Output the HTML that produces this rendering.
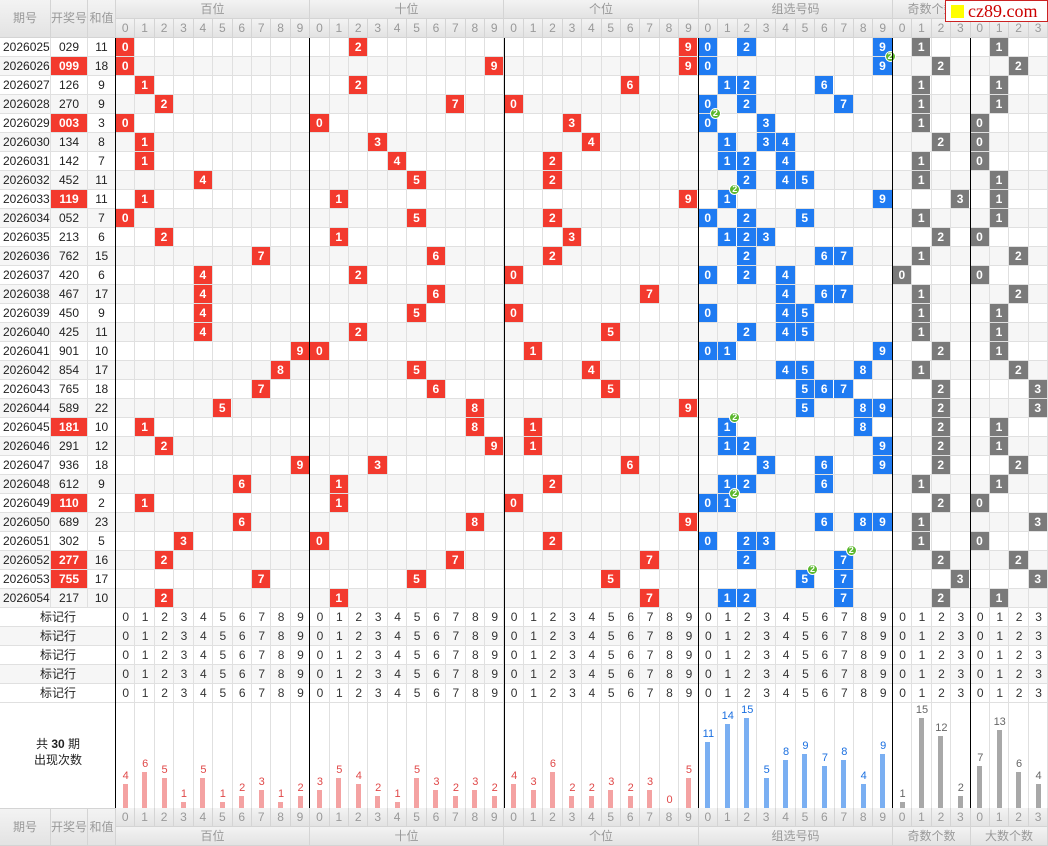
<!DOCTYPE html>
<html><head><meta charset="utf-8"><style>
*{box-sizing:border-box}
body{margin:0;background:#fff;width:1048px;height:846px;overflow:hidden;position:relative;font-family:"Liberation Sans","Noto Sans CJK SC",sans-serif;font-size:12px;color:#222}
.abs{position:absolute}
.hd{position:absolute;background:linear-gradient(#f3f3f3,#e3e3e3);color:#999;text-align:center;border-right:1px solid #d4d4d4;border-bottom:1px solid #d4d4d4}
.nums{position:absolute;left:116px;width:932px;display:flex}
.nums span{flex:1 1 0;min-width:0;text-align:center;border-right:1px solid #d4d4d4;height:19px;line-height:18px}
.nums.h span{background:linear-gradient(#f3f3f3,#e3e3e3);color:#999;border-bottom:1px solid #d4d4d4}
.row{position:relative;height:19px;border-bottom:1px solid #e0e0e0;line-height:18px}
.row:nth-child(even){background:#f6f6f6}
.q,.k,.s{position:absolute;top:0;height:18px;border-right:1px solid #e0e0e0;text-align:center}
.q{left:0;width:51px;text-align:left;padding-left:3px}
.k{left:51px;width:37px}
.s{left:88px;width:28px}
.k.r{background:#f33a2e;color:#fff;font-weight:bold}
.cs{position:absolute;left:116px;top:0;width:932px;height:18px;z-index:3}
.c{position:absolute;top:0;left:calc(var(--c) * 19.4167px);width:18.4px;height:18px;color:#fff;font-weight:bold;text-align:center;line-height:18px}
.r{background:#f33a2e}.b{background:#1f7bf2}.g{background:#7a7a7a}
.c i{position:absolute;top:-6px;right:-4px;width:11px;height:11px;border-radius:50%;background:#5cb82e;color:#fff;font-size:9px;line-height:9px;font-style:normal;border:1px solid #fff;z-index:4}
.vl{position:absolute;left:116px;top:38px;width:932px;height:770px;display:flex;z-index:2;pointer-events:none}
.vl i{flex:1 1 0;border-right:1px solid #e0e0e0}
.blk{position:absolute;top:38px;height:770px;width:1px;background:#000;z-index:5}
.mk .row:nth-child(even){background:#f6f6f6}
.mk .lab{position:absolute;left:0;width:116px;text-align:center;top:0}
.mk .nums{top:0}
.mk .nums span{border-right:none;color:#333}
.st{position:absolute;left:116px;top:703px;width:932px;height:105px;display:flex;z-index:3}
.st div{flex:1 1 0;min-width:0;display:flex;flex-direction:column;justify-content:flex-end;align-items:center}
.st p{margin:0 0 2px 0;font-size:11px;line-height:12px}
.st u{display:block;width:5px;margin-left:-1px}
.rr p{color:#e04848}.rr u{background:#f4a2a2}
.bb p{color:#1a6fe0}.bb u{background:#7aaff2}
.gg p{color:#666}.gg u{background:#a8a8a8}
.wm{position:absolute;left:945px;top:0;width:103px;height:22px;background:#fff;border:1px solid #c22;font-family:"Liberation Serif",serif;font-size:18px;color:#c00;line-height:20px;z-index:9}
.wm span{position:absolute;left:5px;top:4px;width:13px;height:13px;background:#ff0}
.wm b{position:absolute;left:22px;font-weight:normal}
</style></head><body>

<!-- header -->
<div class="hd" style="left:0;top:0;width:51px;height:38px;line-height:37px">期号</div>
<div class="hd" style="left:51px;top:0;width:37px;height:38px;line-height:37px">开奖号</div>
<div class="hd" style="left:88px;top:0;width:28px;height:38px;line-height:37px">和值</div>
<div class="hd" style="left:116px;top:0;width:194px;height:19px;line-height:18px">百位</div>
<div class="hd" style="left:310px;top:0;width:194px;height:19px;line-height:18px">十位</div>
<div class="hd" style="left:504px;top:0;width:195px;height:19px;line-height:18px">个位</div>
<div class="hd" style="left:699px;top:0;width:194px;height:19px;line-height:18px">组选号码</div>
<div class="hd" style="left:893px;top:0;width:78px;height:19px;line-height:18px">奇数个数</div>
<div class="hd" style="left:971px;top:0;width:77px;height:19px;line-height:18px">大数个数</div>
<div class="nums h" style="top:19px"><span>0</span><span>1</span><span>2</span><span>3</span><span>4</span><span>5</span><span>6</span><span>7</span><span>8</span><span>9</span><span>0</span><span>1</span><span>2</span><span>3</span><span>4</span><span>5</span><span>6</span><span>7</span><span>8</span><span>9</span><span>0</span><span>1</span><span>2</span><span>3</span><span>4</span><span>5</span><span>6</span><span>7</span><span>8</span><span>9</span><span>0</span><span>1</span><span>2</span><span>3</span><span>4</span><span>5</span><span>6</span><span>7</span><span>8</span><span>9</span><span>0</span><span>1</span><span>2</span><span>3</span><span>0</span><span>1</span><span>2</span><span>3</span></div>

<div class="vl"><i></i><i></i><i></i><i></i><i></i><i></i><i></i><i></i><i></i><i></i><i></i><i></i><i></i><i></i><i></i><i></i><i></i><i></i><i></i><i></i><i></i><i></i><i></i><i></i><i></i><i></i><i></i><i></i><i></i><i></i><i></i><i></i><i></i><i></i><i></i><i></i><i></i><i></i><i></i><i></i><i></i><i></i><i></i><i></i><i></i><i></i><i></i><i></i></div>
<div class="blk" style="left:115px"></div>
<div class="blk" style="left:309px"></div>
<div class="blk" style="left:504px"></div>
<div class="blk" style="left:698px"></div>
<div class="blk" style="left:892px"></div>
<div class="blk" style="left:970px"></div>

<!-- data -->
<div class="abs" style="left:0;top:38px;width:1048px">
<div class="row"><span class="q">2026025</span><span class="k">029</span><span class="s">11</span><div class="cs"><b class="c r" style="--c:0">0</b><b class="c r" style="--c:12">2</b><b class="c r" style="--c:29">9</b><b class="c b" style="--c:30">0</b><b class="c b" style="--c:32">2</b><b class="c b" style="--c:39">9</b><b class="c g" style="--c:41">1</b><b class="c g" style="--c:45">1</b></div></div>
<div class="row"><span class="q">2026026</span><span class="k r">099</span><span class="s">18</span><div class="cs"><b class="c r" style="--c:0">0</b><b class="c r" style="--c:19">9</b><b class="c r" style="--c:29">9</b><b class="c b" style="--c:30">0</b><b class="c b" style="--c:39">9<i>2</i></b><b class="c g" style="--c:42">2</b><b class="c g" style="--c:46">2</b></div></div>
<div class="row"><span class="q">2026027</span><span class="k">126</span><span class="s">9</span><div class="cs"><b class="c r" style="--c:1">1</b><b class="c r" style="--c:12">2</b><b class="c r" style="--c:26">6</b><b class="c b" style="--c:31">1</b><b class="c b" style="--c:32">2</b><b class="c b" style="--c:36">6</b><b class="c g" style="--c:41">1</b><b class="c g" style="--c:45">1</b></div></div>
<div class="row"><span class="q">2026028</span><span class="k">270</span><span class="s">9</span><div class="cs"><b class="c r" style="--c:2">2</b><b class="c r" style="--c:17">7</b><b class="c r" style="--c:20">0</b><b class="c b" style="--c:30">0</b><b class="c b" style="--c:32">2</b><b class="c b" style="--c:37">7</b><b class="c g" style="--c:41">1</b><b class="c g" style="--c:45">1</b></div></div>
<div class="row"><span class="q">2026029</span><span class="k r">003</span><span class="s">3</span><div class="cs"><b class="c r" style="--c:0">0</b><b class="c r" style="--c:10">0</b><b class="c r" style="--c:23">3</b><b class="c b" style="--c:30">0<i>2</i></b><b class="c b" style="--c:33">3</b><b class="c g" style="--c:41">1</b><b class="c g" style="--c:44">0</b></div></div>
<div class="row"><span class="q">2026030</span><span class="k">134</span><span class="s">8</span><div class="cs"><b class="c r" style="--c:1">1</b><b class="c r" style="--c:13">3</b><b class="c r" style="--c:24">4</b><b class="c b" style="--c:31">1</b><b class="c b" style="--c:33">3</b><b class="c b" style="--c:34">4</b><b class="c g" style="--c:42">2</b><b class="c g" style="--c:44">0</b></div></div>
<div class="row"><span class="q">2026031</span><span class="k">142</span><span class="s">7</span><div class="cs"><b class="c r" style="--c:1">1</b><b class="c r" style="--c:14">4</b><b class="c r" style="--c:22">2</b><b class="c b" style="--c:31">1</b><b class="c b" style="--c:32">2</b><b class="c b" style="--c:34">4</b><b class="c g" style="--c:41">1</b><b class="c g" style="--c:44">0</b></div></div>
<div class="row"><span class="q">2026032</span><span class="k">452</span><span class="s">11</span><div class="cs"><b class="c r" style="--c:4">4</b><b class="c r" style="--c:15">5</b><b class="c r" style="--c:22">2</b><b class="c b" style="--c:32">2</b><b class="c b" style="--c:34">4</b><b class="c b" style="--c:35">5</b><b class="c g" style="--c:41">1</b><b class="c g" style="--c:45">1</b></div></div>
<div class="row"><span class="q">2026033</span><span class="k r">119</span><span class="s">11</span><div class="cs"><b class="c r" style="--c:1">1</b><b class="c r" style="--c:11">1</b><b class="c r" style="--c:29">9</b><b class="c b" style="--c:31">1<i>2</i></b><b class="c b" style="--c:39">9</b><b class="c g" style="--c:43">3</b><b class="c g" style="--c:45">1</b></div></div>
<div class="row"><span class="q">2026034</span><span class="k">052</span><span class="s">7</span><div class="cs"><b class="c r" style="--c:0">0</b><b class="c r" style="--c:15">5</b><b class="c r" style="--c:22">2</b><b class="c b" style="--c:30">0</b><b class="c b" style="--c:32">2</b><b class="c b" style="--c:35">5</b><b class="c g" style="--c:41">1</b><b class="c g" style="--c:45">1</b></div></div>
<div class="row"><span class="q">2026035</span><span class="k">213</span><span class="s">6</span><div class="cs"><b class="c r" style="--c:2">2</b><b class="c r" style="--c:11">1</b><b class="c r" style="--c:23">3</b><b class="c b" style="--c:31">1</b><b class="c b" style="--c:32">2</b><b class="c b" style="--c:33">3</b><b class="c g" style="--c:42">2</b><b class="c g" style="--c:44">0</b></div></div>
<div class="row"><span class="q">2026036</span><span class="k">762</span><span class="s">15</span><div class="cs"><b class="c r" style="--c:7">7</b><b class="c r" style="--c:16">6</b><b class="c r" style="--c:22">2</b><b class="c b" style="--c:32">2</b><b class="c b" style="--c:36">6</b><b class="c b" style="--c:37">7</b><b class="c g" style="--c:41">1</b><b class="c g" style="--c:46">2</b></div></div>
<div class="row"><span class="q">2026037</span><span class="k">420</span><span class="s">6</span><div class="cs"><b class="c r" style="--c:4">4</b><b class="c r" style="--c:12">2</b><b class="c r" style="--c:20">0</b><b class="c b" style="--c:30">0</b><b class="c b" style="--c:32">2</b><b class="c b" style="--c:34">4</b><b class="c g" style="--c:40">0</b><b class="c g" style="--c:44">0</b></div></div>
<div class="row"><span class="q">2026038</span><span class="k">467</span><span class="s">17</span><div class="cs"><b class="c r" style="--c:4">4</b><b class="c r" style="--c:16">6</b><b class="c r" style="--c:27">7</b><b class="c b" style="--c:34">4</b><b class="c b" style="--c:36">6</b><b class="c b" style="--c:37">7</b><b class="c g" style="--c:41">1</b><b class="c g" style="--c:46">2</b></div></div>
<div class="row"><span class="q">2026039</span><span class="k">450</span><span class="s">9</span><div class="cs"><b class="c r" style="--c:4">4</b><b class="c r" style="--c:15">5</b><b class="c r" style="--c:20">0</b><b class="c b" style="--c:30">0</b><b class="c b" style="--c:34">4</b><b class="c b" style="--c:35">5</b><b class="c g" style="--c:41">1</b><b class="c g" style="--c:45">1</b></div></div>
<div class="row"><span class="q">2026040</span><span class="k">425</span><span class="s">11</span><div class="cs"><b class="c r" style="--c:4">4</b><b class="c r" style="--c:12">2</b><b class="c r" style="--c:25">5</b><b class="c b" style="--c:32">2</b><b class="c b" style="--c:34">4</b><b class="c b" style="--c:35">5</b><b class="c g" style="--c:41">1</b><b class="c g" style="--c:45">1</b></div></div>
<div class="row"><span class="q">2026041</span><span class="k">901</span><span class="s">10</span><div class="cs"><b class="c r" style="--c:9">9</b><b class="c r" style="--c:10">0</b><b class="c r" style="--c:21">1</b><b class="c b" style="--c:30">0</b><b class="c b" style="--c:31">1</b><b class="c b" style="--c:39">9</b><b class="c g" style="--c:42">2</b><b class="c g" style="--c:45">1</b></div></div>
<div class="row"><span class="q">2026042</span><span class="k">854</span><span class="s">17</span><div class="cs"><b class="c r" style="--c:8">8</b><b class="c r" style="--c:15">5</b><b class="c r" style="--c:24">4</b><b class="c b" style="--c:34">4</b><b class="c b" style="--c:35">5</b><b class="c b" style="--c:38">8</b><b class="c g" style="--c:41">1</b><b class="c g" style="--c:46">2</b></div></div>
<div class="row"><span class="q">2026043</span><span class="k">765</span><span class="s">18</span><div class="cs"><b class="c r" style="--c:7">7</b><b class="c r" style="--c:16">6</b><b class="c r" style="--c:25">5</b><b class="c b" style="--c:35">5</b><b class="c b" style="--c:36">6</b><b class="c b" style="--c:37">7</b><b class="c g" style="--c:42">2</b><b class="c g" style="--c:47">3</b></div></div>
<div class="row"><span class="q">2026044</span><span class="k">589</span><span class="s">22</span><div class="cs"><b class="c r" style="--c:5">5</b><b class="c r" style="--c:18">8</b><b class="c r" style="--c:29">9</b><b class="c b" style="--c:35">5</b><b class="c b" style="--c:38">8</b><b class="c b" style="--c:39">9</b><b class="c g" style="--c:42">2</b><b class="c g" style="--c:47">3</b></div></div>
<div class="row"><span class="q">2026045</span><span class="k r">181</span><span class="s">10</span><div class="cs"><b class="c r" style="--c:1">1</b><b class="c r" style="--c:18">8</b><b class="c r" style="--c:21">1</b><b class="c b" style="--c:31">1<i>2</i></b><b class="c b" style="--c:38">8</b><b class="c g" style="--c:42">2</b><b class="c g" style="--c:45">1</b></div></div>
<div class="row"><span class="q">2026046</span><span class="k">291</span><span class="s">12</span><div class="cs"><b class="c r" style="--c:2">2</b><b class="c r" style="--c:19">9</b><b class="c r" style="--c:21">1</b><b class="c b" style="--c:31">1</b><b class="c b" style="--c:32">2</b><b class="c b" style="--c:39">9</b><b class="c g" style="--c:42">2</b><b class="c g" style="--c:45">1</b></div></div>
<div class="row"><span class="q">2026047</span><span class="k">936</span><span class="s">18</span><div class="cs"><b class="c r" style="--c:9">9</b><b class="c r" style="--c:13">3</b><b class="c r" style="--c:26">6</b><b class="c b" style="--c:33">3</b><b class="c b" style="--c:36">6</b><b class="c b" style="--c:39">9</b><b class="c g" style="--c:42">2</b><b class="c g" style="--c:46">2</b></div></div>
<div class="row"><span class="q">2026048</span><span class="k">612</span><span class="s">9</span><div class="cs"><b class="c r" style="--c:6">6</b><b class="c r" style="--c:11">1</b><b class="c r" style="--c:22">2</b><b class="c b" style="--c:31">1</b><b class="c b" style="--c:32">2</b><b class="c b" style="--c:36">6</b><b class="c g" style="--c:41">1</b><b class="c g" style="--c:45">1</b></div></div>
<div class="row"><span class="q">2026049</span><span class="k r">110</span><span class="s">2</span><div class="cs"><b class="c r" style="--c:1">1</b><b class="c r" style="--c:11">1</b><b class="c r" style="--c:20">0</b><b class="c b" style="--c:30">0</b><b class="c b" style="--c:31">1<i>2</i></b><b class="c g" style="--c:42">2</b><b class="c g" style="--c:44">0</b></div></div>
<div class="row"><span class="q">2026050</span><span class="k">689</span><span class="s">23</span><div class="cs"><b class="c r" style="--c:6">6</b><b class="c r" style="--c:18">8</b><b class="c r" style="--c:29">9</b><b class="c b" style="--c:36">6</b><b class="c b" style="--c:38">8</b><b class="c b" style="--c:39">9</b><b class="c g" style="--c:41">1</b><b class="c g" style="--c:47">3</b></div></div>
<div class="row"><span class="q">2026051</span><span class="k">302</span><span class="s">5</span><div class="cs"><b class="c r" style="--c:3">3</b><b class="c r" style="--c:10">0</b><b class="c r" style="--c:22">2</b><b class="c b" style="--c:30">0</b><b class="c b" style="--c:32">2</b><b class="c b" style="--c:33">3</b><b class="c g" style="--c:41">1</b><b class="c g" style="--c:44">0</b></div></div>
<div class="row"><span class="q">2026052</span><span class="k r">277</span><span class="s">16</span><div class="cs"><b class="c r" style="--c:2">2</b><b class="c r" style="--c:17">7</b><b class="c r" style="--c:27">7</b><b class="c b" style="--c:32">2</b><b class="c b" style="--c:37">7<i>2</i></b><b class="c g" style="--c:42">2</b><b class="c g" style="--c:46">2</b></div></div>
<div class="row"><span class="q">2026053</span><span class="k r">755</span><span class="s">17</span><div class="cs"><b class="c r" style="--c:7">7</b><b class="c r" style="--c:15">5</b><b class="c r" style="--c:25">5</b><b class="c b" style="--c:35">5<i>2</i></b><b class="c b" style="--c:37">7</b><b class="c g" style="--c:43">3</b><b class="c g" style="--c:47">3</b></div></div>
<div class="row"><span class="q">2026054</span><span class="k">217</span><span class="s">10</span><div class="cs"><b class="c r" style="--c:2">2</b><b class="c r" style="--c:11">1</b><b class="c r" style="--c:27">7</b><b class="c b" style="--c:31">1</b><b class="c b" style="--c:32">2</b><b class="c b" style="--c:37">7</b><b class="c g" style="--c:42">2</b><b class="c g" style="--c:45">1</b></div></div>
</div>

<!-- marker rows -->
<div class="abs mk" style="left:0;top:608px;width:1048px">
<div class="row"><span class="lab">标记行</span><div class="nums"><span>0</span><span>1</span><span>2</span><span>3</span><span>4</span><span>5</span><span>6</span><span>7</span><span>8</span><span>9</span><span>0</span><span>1</span><span>2</span><span>3</span><span>4</span><span>5</span><span>6</span><span>7</span><span>8</span><span>9</span><span>0</span><span>1</span><span>2</span><span>3</span><span>4</span><span>5</span><span>6</span><span>7</span><span>8</span><span>9</span><span>0</span><span>1</span><span>2</span><span>3</span><span>4</span><span>5</span><span>6</span><span>7</span><span>8</span><span>9</span><span>0</span><span>1</span><span>2</span><span>3</span><span>0</span><span>1</span><span>2</span><span>3</span></div></div>
<div class="row"><span class="lab">标记行</span><div class="nums"><span>0</span><span>1</span><span>2</span><span>3</span><span>4</span><span>5</span><span>6</span><span>7</span><span>8</span><span>9</span><span>0</span><span>1</span><span>2</span><span>3</span><span>4</span><span>5</span><span>6</span><span>7</span><span>8</span><span>9</span><span>0</span><span>1</span><span>2</span><span>3</span><span>4</span><span>5</span><span>6</span><span>7</span><span>8</span><span>9</span><span>0</span><span>1</span><span>2</span><span>3</span><span>4</span><span>5</span><span>6</span><span>7</span><span>8</span><span>9</span><span>0</span><span>1</span><span>2</span><span>3</span><span>0</span><span>1</span><span>2</span><span>3</span></div></div>
<div class="row"><span class="lab">标记行</span><div class="nums"><span>0</span><span>1</span><span>2</span><span>3</span><span>4</span><span>5</span><span>6</span><span>7</span><span>8</span><span>9</span><span>0</span><span>1</span><span>2</span><span>3</span><span>4</span><span>5</span><span>6</span><span>7</span><span>8</span><span>9</span><span>0</span><span>1</span><span>2</span><span>3</span><span>4</span><span>5</span><span>6</span><span>7</span><span>8</span><span>9</span><span>0</span><span>1</span><span>2</span><span>3</span><span>4</span><span>5</span><span>6</span><span>7</span><span>8</span><span>9</span><span>0</span><span>1</span><span>2</span><span>3</span><span>0</span><span>1</span><span>2</span><span>3</span></div></div>
<div class="row"><span class="lab">标记行</span><div class="nums"><span>0</span><span>1</span><span>2</span><span>3</span><span>4</span><span>5</span><span>6</span><span>7</span><span>8</span><span>9</span><span>0</span><span>1</span><span>2</span><span>3</span><span>4</span><span>5</span><span>6</span><span>7</span><span>8</span><span>9</span><span>0</span><span>1</span><span>2</span><span>3</span><span>4</span><span>5</span><span>6</span><span>7</span><span>8</span><span>9</span><span>0</span><span>1</span><span>2</span><span>3</span><span>4</span><span>5</span><span>6</span><span>7</span><span>8</span><span>9</span><span>0</span><span>1</span><span>2</span><span>3</span><span>0</span><span>1</span><span>2</span><span>3</span></div></div>
<div class="row"><span class="lab">标记行</span><div class="nums"><span>0</span><span>1</span><span>2</span><span>3</span><span>4</span><span>5</span><span>6</span><span>7</span><span>8</span><span>9</span><span>0</span><span>1</span><span>2</span><span>3</span><span>4</span><span>5</span><span>6</span><span>7</span><span>8</span><span>9</span><span>0</span><span>1</span><span>2</span><span>3</span><span>4</span><span>5</span><span>6</span><span>7</span><span>8</span><span>9</span><span>0</span><span>1</span><span>2</span><span>3</span><span>4</span><span>5</span><span>6</span><span>7</span><span>8</span><span>9</span><span>0</span><span>1</span><span>2</span><span>3</span><span>0</span><span>1</span><span>2</span><span>3</span></div></div>
</div>

<!-- stats -->
<div class="abs" style="left:0;top:736px;width:116px;text-align:center;line-height:16px">共 <b>30</b> 期<br>出现次数</div>
<div class="st">
<div class="rr"><p>4</p><u style="height:24px"></u></div><div class="rr"><p>6</p><u style="height:36px"></u></div><div class="rr"><p>5</p><u style="height:30px"></u></div><div class="rr"><p>1</p><u style="height:6px"></u></div><div class="rr"><p>5</p><u style="height:30px"></u></div><div class="rr"><p>1</p><u style="height:6px"></u></div><div class="rr"><p>2</p><u style="height:12px"></u></div><div class="rr"><p>3</p><u style="height:18px"></u></div><div class="rr"><p>1</p><u style="height:6px"></u></div><div class="rr"><p>2</p><u style="height:12px"></u></div>
<div class="rr"><p>3</p><u style="height:18px"></u></div><div class="rr"><p>5</p><u style="height:30px"></u></div><div class="rr"><p>4</p><u style="height:24px"></u></div><div class="rr"><p>2</p><u style="height:12px"></u></div><div class="rr"><p>1</p><u style="height:6px"></u></div><div class="rr"><p>5</p><u style="height:30px"></u></div><div class="rr"><p>3</p><u style="height:18px"></u></div><div class="rr"><p>2</p><u style="height:12px"></u></div><div class="rr"><p>3</p><u style="height:18px"></u></div><div class="rr"><p>2</p><u style="height:12px"></u></div>
<div class="rr"><p>4</p><u style="height:24px"></u></div><div class="rr"><p>3</p><u style="height:18px"></u></div><div class="rr"><p>6</p><u style="height:36px"></u></div><div class="rr"><p>2</p><u style="height:12px"></u></div><div class="rr"><p>2</p><u style="height:12px"></u></div><div class="rr"><p>3</p><u style="height:18px"></u></div><div class="rr"><p>2</p><u style="height:12px"></u></div><div class="rr"><p>3</p><u style="height:18px"></u></div><div class="rr"><p>0</p><u style="height:0px"></u></div><div class="rr"><p>5</p><u style="height:30px"></u></div>
<div class="bb"><p>11</p><u style="height:66px"></u></div><div class="bb"><p>14</p><u style="height:84px"></u></div><div class="bb"><p>15</p><u style="height:90px"></u></div><div class="bb"><p>5</p><u style="height:30px"></u></div><div class="bb"><p>8</p><u style="height:48px"></u></div><div class="bb"><p>9</p><u style="height:54px"></u></div><div class="bb"><p>7</p><u style="height:42px"></u></div><div class="bb"><p>8</p><u style="height:48px"></u></div><div class="bb"><p>4</p><u style="height:24px"></u></div><div class="bb"><p>9</p><u style="height:54px"></u></div>
<div class="gg"><p>1</p><u style="height:6px"></u></div><div class="gg"><p>15</p><u style="height:90px"></u></div><div class="gg"><p>12</p><u style="height:72px"></u></div><div class="gg"><p>2</p><u style="height:12px"></u></div>
<div class="gg"><p>7</p><u style="height:42px"></u></div><div class="gg"><p>13</p><u style="height:78px"></u></div><div class="gg"><p>6</p><u style="height:36px"></u></div><div class="gg"><p>4</p><u style="height:24px"></u></div>
</div>

<!-- footer -->
<div class="hd" style="left:0;top:808px;width:51px;height:38px;line-height:37px;border-top:1px solid #d4d4d4">期号</div>
<div class="hd" style="left:51px;top:808px;width:37px;height:38px;line-height:37px;border-top:1px solid #d4d4d4">开奖号</div>
<div class="hd" style="left:88px;top:808px;width:28px;height:38px;line-height:37px;border-top:1px solid #d4d4d4">和值</div>
<div class="nums h" style="top:808px;z-index:6"><span>0</span><span>1</span><span>2</span><span>3</span><span>4</span><span>5</span><span>6</span><span>7</span><span>8</span><span>9</span><span>0</span><span>1</span><span>2</span><span>3</span><span>4</span><span>5</span><span>6</span><span>7</span><span>8</span><span>9</span><span>0</span><span>1</span><span>2</span><span>3</span><span>4</span><span>5</span><span>6</span><span>7</span><span>8</span><span>9</span><span>0</span><span>1</span><span>2</span><span>3</span><span>4</span><span>5</span><span>6</span><span>7</span><span>8</span><span>9</span><span>0</span><span>1</span><span>2</span><span>3</span><span>0</span><span>1</span><span>2</span><span>3</span></div>
<div class="hd" style="left:116px;top:827px;width:194px;height:19px;line-height:18px">百位</div>
<div class="hd" style="left:310px;top:827px;width:194px;height:19px;line-height:18px">十位</div>
<div class="hd" style="left:504px;top:827px;width:195px;height:19px;line-height:18px">个位</div>
<div class="hd" style="left:699px;top:827px;width:194px;height:19px;line-height:18px">组选号码</div>
<div class="hd" style="left:893px;top:827px;width:78px;height:19px;line-height:18px">奇数个数</div>
<div class="hd" style="left:971px;top:827px;width:77px;height:19px;line-height:18px">大数个数</div>

<div class="wm"><span></span><b>cz89.com</b></div>
</body></html>
